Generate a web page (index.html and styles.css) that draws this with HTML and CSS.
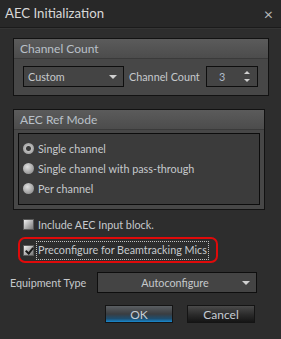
FILE: index.html
```html
<!DOCTYPE html>
<html>
<head>
  <title>AEC Initialization</title>
  <meta charset=utf-8>
  <link rel="stylesheet" href="styles.css">
</head>
<body>

  <div id=titlebar>
    <span class="title">AEC Initialization</span>
    <span class="close">×</span>
  </div>

  <div id=dialog>
    <div class="group" id=count-group>
      <div class="group-head">Channel Count</div>
      <div class="group-body row">
        <div class="combo" id=custom><span>Custom</span><i class="arrow"></i></div>
        <span class="label">Channel Count</span>
        <div class="spin"><span>3</span><i class="up"></i><i class="down"></i></div>
      </div>
    </div>

    <div class="group" id=mode-group>
      <div class="group-head">AEC Ref Mode</div>
      <div class="group-body">
        <div class="inset">
          <div class="opt"><i class="radio on"></i>Single channel</div>
          <div class="opt"><i class="radio"></i>Single channel with pass-through</div>
          <div class="opt"><i class="radio"></i>Per channel</div>
        </div>
      </div>
    </div>

    <div class="opt check-row"><i class="check"></i>Include AEC Input block.</div>

    <div id=highlight>
      <div class="opt"><i class="check on"></i><span class="focus">Preconfigure for Beamtracking Mics</span></div>
    </div>

    <div class="row" id=equip>
      <span class="label">Equipment Type</span>
      <div class="combo" id=equip-combo><span>Autoconfigure</span><i class="arrow"></i></div>
    </div>

    <div class="row" id=buttons>
      <button class="btn default">OK</button>
      <button class="btn">Cancel</button>
    </div>
  </div>

</body>
</html>
```

FILE: styles.css
```css
* {
  font-family: Lato, "Liberation Sans", sans-serif;
  box-sizing: border-box;
  white-space: nowrap;
}
html, body {
  margin: 0;
  height: 100%;
  background: #2d2d2d;
  color: #c6c9cc;
  font-size: 10.8px;
}
i {
  display: inline-block;
  font-style: normal;
  flex-shrink: 0;
}

#titlebar {
  height: 28px;
  background: #282828;
  border-bottom: 1px solid #1b1b1b;
  box-shadow: 0 1px 0 #353535;
  display: flex;
  align-items: center;
  justify-content: space-between;
  padding: 0 8px 1px 5px;
}
.title {
  font-size: 13.2px;
  color: #d8d8d8;
}
.close {
  font-size: 16px;
  color: #b8b8b8;
}

#dialog {
  padding: 10px 0 0 13px;
}
.row {
  display: flex;
  align-items: center;
}

.group {
  border: 1px solid #121212;
  background: #474747;
}
#count-group {
  width: 256px;
}
#mode-group {
  width: 252px;
  margin-top: 13px;
}
.group-head {
  height: 20px;
  padding: 0 6px;
  line-height: 19px;
  font-size: 12px;
  color: #b9c0c8;
  background: linear-gradient(#5b5b5b, #4c4c4c);
  border-bottom: 1px solid #3a3a3a;
}
#count-group .group-body {
  padding: 7px 9px 8px 9px;
}
#mode-group .group-body {
  padding: 3px 4px 4px 4px;
}

.combo, .spin {
  height: 21px;
  border: 1px solid #0e0e0e;
  background: #444444;
  display: flex;
  align-items: center;
  position: relative;
  flex-shrink: 0;
}
.combo span {
  padding-left: 4px;
}
.arrow {
  position: absolute;
  right: 6px;
  top: 8px;
  border-left: 4px solid transparent;
  border-right: 4px solid transparent;
  border-top: 4px solid #d0d0d0;
}
#custom {
  width: 101px;
}
.label {
  width: 77px;
  margin: 0 0 0 5px;
}
.spin {
  width: 52px;
}
.spin span {
  padding-left: 12px;
  color: #b0bccc;
}
.up, .down {
  position: absolute;
  right: 7px;
  border-left: 3px solid transparent;
  border-right: 3px solid transparent;
}
.up {
  top: 4px;
  border-bottom: 3px solid #d0d0d0;
}
.down {
  bottom: 4px;
  border-top: 3px solid #d0d0d0;
}

.inset {
  height: 72px;
  border: 1px solid #0c0c0c;
  background: #3b3b3b;
  padding: 4px 0 0 4px;
}
.opt {
  height: 20px;
  display: flex;
  align-items: center;
}
.radio {
  width: 11px;
  height: 11px;
  border-radius: 50%;
  margin-right: 4px;
  background: radial-gradient(circle at 40% 35%, #e0e0e0, #9a9a9a 70%, #6a6a6a);
}
.radio.on {
  background: radial-gradient(circle, #3a3a3a 0 2px, #bdbdbd 3px, #8a8a8a);
}
.check {
  width: 11px;
  height: 11px;
  margin-right: 4px;
  background: linear-gradient(135deg, #f0f0f0, #a8a8a8 60%, #7a7a7a);
  border: 1px solid #5a5a5a;
  position: relative;
}
.check.on::after {
  content: "";
  position: absolute;
  left: 3px;
  top: 0;
  width: 3px;
  height: 6px;
  border: solid #1a1a1a;
  border-width: 0 2px 2px 0;
  transform: rotate(40deg);
}
.check-row {
  margin: 6px 0 0 10px;
  height: 16px;
}

#highlight {
  width: 200px;
  height: 26px;
  margin: 5px 0 0 5px;
  border: 2px solid #e00a0a;
  border-radius: 7px;
  padding: 1px 0 0 3px;
}
#highlight .opt {
  height: 20px;
}
.focus {
  border: 1px dotted #c0c0c0;
  padding: 0 1px 1px 1px;
  margin-left: -2px;
  line-height: 16px;
}

#equip {
  margin: 9px 0 0 -3px;
}
#equip .label {
  width: 87px;
  margin: 0;
}
#equip-combo {
  width: 160px;
  justify-content: center;
}
#equip-combo span {
  padding: 0 4px 0 0;
}

#buttons {
  margin: 12px 0 0 92px;
  gap: 14px;
}
.btn {
  width: 68px;
  height: 18px;
  padding: 0;
  font-size: 12px;
  line-height: 15px;
  color: #c6ccd4;
  border: 1px solid #141414;
  background: linear-gradient(#4a4a4a, #2a2a2a 55%, #151515);
}
.btn.default {
  background: linear-gradient(#5a5e62, #3a3d40 50%, #1d4e70 80%, #1a8ad0);
}
```
